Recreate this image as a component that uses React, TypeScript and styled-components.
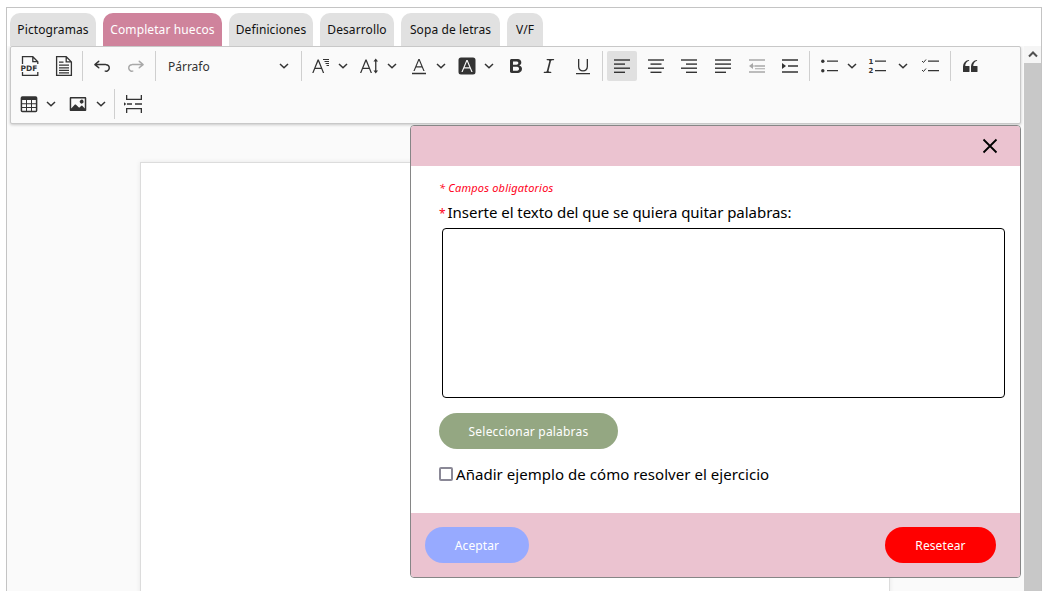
import React from 'react';
import styled, {createGlobalStyle} from "styled-components";

const tabs = [
    {label: "Pictogramas", width: 86},
    {label: "Completar huecos", width: 119},
    {label: "Definiciones", width: 84},
    {label: "Desarrollo", width: 74},
    {label: "Sopa de letras", width: 99},
    {label: "V/F", width: 36},
];

const paths: Record<string, string> = {
    undo: "m5.042 9.367 2.189 1.837a.75.75 0 0 1-.965 1.149l-3.788-3.18a.747.747 0 0 1-.21-.284.75.75 0 0 1 .17-.945L6.23 4.762a.75.75 0 1 1 .964 1.15L4.863 7.866h8.917A.75.75 0 0 1 14 7.9a4 4 0 1 1-1.477 7.718l.344-1.489a2.5 2.5 0 1 0 1.094-4.73l.008-.032H5.042z",
    redo: "m14.958 9.367-2.189 1.837a.75.75 0 0 0 .965 1.149l3.788-3.18a.747.747 0 0 0 .21-.284.75.75 0 0 0-.17-.945L13.77 4.762a.75.75 0 1 0-.964 1.15l2.331 1.955H6.22A.75.75 0 0 0 6 7.9a4 4 0 1 0 1.477 7.718l-.344-1.489A2.5 2.5 0 1 1 6.039 9.4l-.008-.032h8.927z",
    bold: "M10.187 17H5.773c-.637 0-1.092-.138-1.364-.415-.273-.277-.409-.718-.409-1.323V4.738c0-.617.14-1.062.419-1.332.279-.27.73-.406 1.354-.406h4.68c.69 0 1.288.041 1.793.124.506.083.96.242 1.36.478.341.197.644.447.906.75a3.262 3.262 0 0 1 .808 2.162c0 1.401-.722 2.426-2.167 3.075C15.05 10.175 16 11.315 16 13.01a3.756 3.756 0 0 1-2.296 3.504 6.1 6.1 0 0 1-1.517.377c-.571.073-1.238.11-2 .11zm-.217-6.217H7v4.087h3.069c1.977 0 2.965-.69 2.965-2.072 0-.707-.256-1.22-.768-1.537-.512-.319-1.277-.478-2.296-.478zM7 5.13v3.619h2.606c.709 0 1.257-.066 1.645-.198a1.569 1.569 0 0 0 .886-.752c.14-.23.21-.487.21-.771 0-.608-.217-1.012-.65-1.212-.433-.2-1.093-.3-1.98-.3H7z",
    italic: "m9.586 14.633.021.004c-.036.335.095.655.393.962.082.083.173.15.274.201h1.474a.6.6 0 1 1 0 1.2H5.304a.6.6 0 0 1 0-1.2h1.15c.474-.07.809-.182 1.005-.334.157-.122.291-.32.404-.597l2.416-9.55a1.053 1.053 0 0 0-.281-.823 1.12 1.12 0 0 0-.442-.296H8.15a.6.6 0 0 1 0-1.2h6.443a.6.6 0 1 1 0 1.2h-1.195c-.376.056-.65.155-.823.296-.215.175-.423.439-.623.79l-2.366 9.347z",
    quote: "M3 10.423a6.5 6.5 0 0 1 6.056-6.408l.038.67C6.448 5.423 5.354 7.663 5.22 10H9c.552 0 .5.432.5.986v4.511c0 .554-.448.503-1 .503h-5c-.552 0-.5-.449-.5-1.003v-4.574zm8 0a6.5 6.5 0 0 1 6.056-6.408l.038.67c-2.646.739-3.74 2.979-3.873 5.315H17c.552 0 .5.432.5.986v4.511c0 .554-.448.503-1 .503h-5c-.552 0-.5-.449-.5-1.003v-4.574z",
    image: "M6.91 10.54c.26-.23.64-.21.88.03l3.36 3.14 2.23-2.06a.64.64 0 0 1 .87 0l2.52 2.97V4.5H3.2v10.12l3.71-4.08zm10.27-7.51c.6 0 1.09.47 1.09 1.05v11.84c0 .59-.49 1.06-1.09 1.06H2.79c-.6 0-1.09-.47-1.09-1.06V4.08c0-.58.49-1.05 1.1-1.05h14.38zm-5.22 5.56a1.96 1.96 0 1 1 3.4-1.96 1.96 1.96 0 0 1-3.4 1.96z",
    fontColor: "M12.4 10.3 10 4.500l-2.400 5.800h4.800zm.5 1.200H7.100L5.600 15H4.400l5-12h1.200l5 12h-1.200l-1.500-3.500zM3 16.800h14v1.400H3z",
    fontBg: "M4 1.500h12a2.500 2.500 0 0 1 2.500 2.500v12a2.500 2.500 0 0 1-2.500 2.500H4A2.500 2.500 0 0 1 1.500 16V4A2.500 2.500 0 0 1 4 1.500zm8.400 9.800L10 5.500l-2.400 5.800h4.800zm.5 1.200H7.100L5.600 16H4.400l5-12h1.200l5 12h-1.200l-1.500-3.500z",
    fontSize: "M9.800 11.800 7.200 5.400l-2.600 6.400h5.200zm.5 1.200H4.100l-1.600 4H1.200L6.600 3.500h1.200L13.200 17h-1.300l-1.600-4zM12 3h6v1h-6zm1.500 2H18v1h-4.500zm1 2H18v1h-3.500zm1 2H18v1h-2.500z",
    lineHeight: "M8.600 11.800 6 5.400l-2.600 6.400h5.200zm.5 1.200H2.900l-1.600 4H0L5.400 3.500h1.200L12 17h-1.300L9.100 13zM15.100 5.500V14.500h1.300V5.500zM15.750 2.500l2.300 3h-4.600zM15.750 17.500l-2.300-3h4.600z",
    underline: "M3 17h14v1.300H3zM5 3h1.300v7.500c0 2.400 1.500 3.700 3.700 3.700s3.700-1.300 3.700-3.700V3H15v7.500c0 3.200-2 5-5 5s-5-1.800-5-5z",
};

const Icon = ({name, muted}: {name: string, muted?: boolean}) => (
    <Glyph viewBox="0 0 20 20" $muted={muted}><path d={paths[name]} fillRule="evenodd"/></Glyph>
);

const Lines = ({rows}: {rows: number[][]}) => (
    <Glyph viewBox="0 0 20 20">
        {rows.map(([x, w], i) => <rect key={i} x={x} y={3.3 + i * 4.1} width={w} height="1.4"/>)}
    </Glyph>
);

const IndentIcon = ({muted, out}: {muted?: boolean, out?: boolean}) => (
    <Glyph viewBox="0 0 20 20" $muted={muted}>
        <path d="M2 3.300h16v1.400H2zM8 9.300h10v1.400H8zM2 15.300h16v1.400H2z"/>
        <path d={out ? "M6 7v6L2 10z" : "M2 7v6l4-3z"}/>
        {out && <path d="M4 9.500h4v1H4zM8 12.300h10v1H8z"/>}
    </Glyph>
);

const PdfIcon = () => (
    <Glyph viewBox="0 0 20 20">
        <path d="M3.500 8V.7h10.300l5 5V8M13.800.7v5h5M3.500 16v3.300h15.300V16" fill="none" stroke="#333" strokeWidth="1.300"/>
        <PdfLabel x="10" y="14.600" textAnchor="middle">PDF</PdfLabel>
    </Glyph>
);

const DocIcon = () => (
    <Glyph viewBox="0 0 20 20">
        <path d="M3.600.7h9.600l5.200 5.200v13.400H3.600zM13.200.7v5.200h5.200" fill="none" stroke="#333" strokeWidth="1.300"/>
        <path d="M6 5.500h4.500v1.200H6zM6 8.600h10v1.200H6zM6 11.200h10v1.200H6zM6 13.800h10V15H6zM6 16.200h10v1.200H6z"/>
    </Glyph>
);

const TableIcon = () => (
    <Glyph viewBox="0 0 20 20">
        <rect x="2.400" y="3" width="15.200" height="14.600" rx="1" fill="none" stroke="#333" strokeWidth="1.500"/>
        <path d="M2.400 3h15.200v3H2.400zM2.400 9.200h15.200v1H2.400zM2.400 13h15.200v1H2.400zM7 5h1v12H7zM12 5h1v12h-1z"/>
    </Glyph>
);

const ListIcon = ({kind}: {kind: "bullet" | "number" | "todo"}) => (
    <Glyph viewBox="0 0 20 20">
        <path d="M7 4.500h11v1.300H7zM7 14h11v1.300H7z"/>
        {kind === "bullet" && <><circle cx="2.800" cy="5.200" r="1.700"/><circle cx="2.800" cy="14.700" r="1.700"/></>}
        {kind === "number" && <>
            <ListDigit x="3" y="7.500" textAnchor="middle">1</ListDigit>
            <ListDigit x="3" y="17" textAnchor="middle">2</ListDigit>
        </>}
        {kind === "todo" && <path d="M1 5l1.500 1.500L5 3.500M1 14l1.500 1.500L5 12.500" fill="none" stroke="#333" strokeWidth="1"/>}
    </Glyph>
);

const PageBreakIcon = () => (
    <Glyph viewBox="0 0 20 20">
        <path d="M2 1h1.300v3.800h13.400V1H18v5.100H2zM2 19h1.300v-3.800h13.400V19H18v-5.100H2z"/>
        <path d="M3 9.300h5v1.400H3zM11 9.300h7v1.400h-7zM0 8.300l2.300 1.700L0 11.700z"/>
    </Glyph>
);

const Chevron = () => (
    <ChevronGlyph viewBox="0 0 10 10"><path d="M1 3l4 3.800L9 3" fill="none" stroke="#333" strokeWidth="1.500"/></ChevronGlyph>
);

const Split = ({children, width = 45, gap = 7}: {children: React.ReactNode, width?: number, gap?: number}) => (
    <DropButton $width={width} $gap={gap}>{children}<Chevron/></DropButton>
);

export default function App() {
    return (
        <>
            <GlobalStyle/>
            <Frame>
                <TabBar>
                    {tabs.map(t => <Tab key={t.label} $width={t.width} $active={t.label === "Completar huecos"}>{t.label}</Tab>)}
                </TabBar>
                <Workspace>
                    <EditorArea>
                        <Toolbar>
                            <ToolRow>
                                <ToolButton><PdfIcon/></ToolButton>
                                <ToolButton><DocIcon/></ToolButton>
                                <Separator/>
                                <ToolButton><Icon name="undo"/></ToolButton>
                                <ToolButton><Icon name="redo" muted/></ToolButton>
                                <Separator/>
                                <HeadingSelect>Párrafo<Chevron/></HeadingSelect>
                                <Separator/>
                                <Split><Icon name="fontSize"/></Split>
                                <Split><Icon name="lineHeight"/></Split>
                                <Split><Icon name="fontColor"/></Split>
                                <Split><Icon name="fontBg"/></Split>
                                <ToolButton><Icon name="bold"/></ToolButton>
                                <ToolButton><Icon name="italic"/></ToolButton>
                                <ToolButton><Icon name="underline"/></ToolButton>
                                <Separator/>
                                <ToolButton $on><Lines rows={[[2, 16], [2, 11], [2, 16], [2, 11]]}/></ToolButton>
                                <ToolButton><Lines rows={[[2, 16], [4.5, 11], [2, 16], [4.5, 11]]}/></ToolButton>
                                <ToolButton><Lines rows={[[2, 16], [7, 11], [2, 16], [7, 11]]}/></ToolButton>
                                <ToolButton><Lines rows={[[2, 16], [2, 16], [2, 16], [2, 11]]}/></ToolButton>
                                <ToolButton><IndentIcon muted out/></ToolButton>
                                <ToolButton><IndentIcon/></ToolButton>
                                <Separator/>
                                <Split><ListIcon kind="bullet"/></Split>
                                <Split width={49} gap={10}><ListIcon kind="number"/></Split>
                                <ToolButton><ListIcon kind="todo"/></ToolButton>
                                <Separator/>
                                <ToolButton><Icon name="quote"/></ToolButton>
                            </ToolRow>
                            <ToolRow>
                                <Split><TableIcon/></Split>
                                <Split width={47} gap={8.5}><Icon name="image"/></Split>
                                <Separator/>
                                <ToolButton><PageBreakIcon/></ToolButton>
                            </ToolRow>
                        </Toolbar>
                        <Canvas>
                            <Sheet/>
                        </Canvas>
                    </EditorArea>
                    <Scrollbar>
                        <ScrollUp>
                            <svg width="10" height="7" viewBox="0 0 10 7"><path d="M1 5.500l4-4 4 4" fill="none" stroke="#505050" strokeWidth="2"/></svg>
                        </ScrollUp>
                        <ScrollThumb/>
                    </Scrollbar>
                </Workspace>
                <Modal>
                    <ModalHeader>
                        <CloseButton>
                            <svg width="16" height="16" viewBox="0 0 16 16"><path d="M1.500 1.500l13 13M14.500 1.500l-13 13" stroke="#000" strokeWidth="1.800"/></svg>
                        </CloseButton>
                    </ModalHeader>
                    <ModalBody>
                        <Required>* Campos obligatorios</Required>
                        <FieldLabel><Star>*</Star>Inserte el texto del que se quiera quitar palabras:</FieldLabel>
                        <TextBox/>
                        <SelectButton>Seleccionar palabras</SelectButton>
                        <CheckRow>
                            <CheckBox type="checkbox"/>
                            Añadir ejemplo de cómo resolver el ejercicio
                        </CheckRow>
                    </ModalBody>
                    <ModalFooter>
                        <PillButton $bg="#97aaff" $width={104}>Aceptar</PillButton>
                        <PillButton $bg="#ff0000" $width={111}>Resetear</PillButton>
                    </ModalFooter>
                </Modal>
            </Frame>
        </>
    );
}

const GlobalStyle = createGlobalStyle`
    html, body {
        margin: 0;
        height: 100%;
        overflow: hidden;
        background: #fff;
        font-family: "Noto Sans", "Liberation Sans", sans-serif;
    }
`

const Frame = styled.div`
    position: relative;
    margin: 7px 0 0 6px;
    width: 1036px;
    height: 584px;
    box-sizing: border-box;
    border: 1px solid #c4c4c4;
    border-bottom: 0;
    overflow: hidden;
`

const TabBar = styled.div`
    display: flex;
    gap: 7px;
    height: 33px;
    margin-top: 5px;
    padding-left: 3px;
`

const Tab = styled.div<{$active?: boolean, $width: number}>`
    display: flex;
    align-items: center;
    justify-content: center;
    width: ${p => p.$width}px;
    border-radius: 10px 10px 0 0;
    font-size: 12px;
    letter-spacing: .1px;
    background: ${p => p.$active ? "#cf839c" : "#e1e1e1"};
    color: ${p => p.$active ? "#fff" : "#111"};
`

const Workspace = styled.div`
    display: flex;
    height: 545px;
`

const EditorArea = styled.div`
    flex: 1;
    overflow: hidden;
    background: #fafafa;
`

const Toolbar = styled.div`
    display: flex;
    flex-direction: column;
    gap: 8px;
    box-sizing: border-box;
    width: 1011px;
    height: 78px;
    margin-left: 3px;
    padding: 4px 3px;
    background: #fafafa;
    border: 1px solid #c8c8c8;
    border-radius: 2px;
    box-shadow: 0 1px 3px rgba(0, 0, 0, .2);
`

const ToolRow = styled.div`
    display: flex;
    align-items: center;
    gap: 3.6px;
    height: 30px;
`

const ToolButton = styled.div<{$on?: boolean}>`
    display: flex;
    align-items: center;
    justify-content: center;
    flex: none;
    width: 30px;
    height: 30px;
    border-radius: 2px;
    background: ${p => p.$on ? "#e0e0e0" : "transparent"};
`

const DropButton = styled.div<{$width: number, $gap: number}>`
    display: flex;
    align-items: center;
    flex: none;
    gap: ${p => p.$gap}px;
    width: ${p => p.$width}px;
    height: 30px;
    padding-left: 5px;
    box-sizing: border-box;
`

const HeadingSelect = styled.div`
    display: flex;
    align-items: center;
    justify-content: space-between;
    flex: none;
    box-sizing: border-box;
    width: 137px;
    height: 30px;
    padding: 0 8px;
    font-size: 12px;
    color: #333;
`

const Separator = styled.span`
    flex: none;
    width: 1px;
    height: 30px;
    margin: 0 .6px;
    background: #cfcfcf;
`

const Glyph = styled.svg<{$muted?: boolean}>`
    width: 20px;
    height: 20px;
    flex: none;
    fill: ${p => p.$muted ? "#a8a8a8" : "#333"};
`

const ChevronGlyph = styled.svg`
    width: 10px;
    height: 10px;
    flex: none;
`

const PdfLabel = styled.text`
    font-family: "DejaVu Sans", sans-serif;
    font-size: 7.5px;
    font-weight: 700;
    fill: #333;
`

const ListDigit = styled.text`
    font-family: "DejaVu Sans", sans-serif;
    font-size: 7px;
    font-weight: 700;
    fill: #333;
`

const Canvas = styled.div`
    padding: 38px 0 0 133px;
`

const Sheet = styled.div`
    width: 748px;
    height: 500px;
    background: #fff;
    border: 1px solid #dcdcdc;
    box-shadow: 0 0 5px rgba(0, 0, 0, .08);
`

const Scrollbar = styled.div`
    display: flex;
    flex-direction: column;
    width: 17px;
    flex: none;
    background: #f1f1f1;
`

const ScrollUp = styled.div`
    display: flex;
    align-items: center;
    justify-content: center;
    height: 17px;
    background: #f5f5f5;
`

const ScrollThumb = styled.div`
    flex: 1;
    background: #c8c8c8;
`

const Modal = styled.div`
    position: absolute;
    left: 403px;
    top: 117px;
    width: 611px;
    height: 453px;
    box-sizing: border-box;
    display: flex;
    flex-direction: column;
    background: #fff;
    border: 1px solid #868686;
    border-radius: 4px;
    overflow: hidden;
`

const ModalHeader = styled.div`
    display: flex;
    align-items: center;
    justify-content: flex-end;
    height: 40px;
    flex: none;
    padding-right: 22px;
    background: #ebc3d0;
`

const CloseButton = styled.div`
    display: flex;
`

const ModalBody = styled.div`
    flex: 1;
    display: flex;
    flex-direction: column;
    align-items: flex-start;
    padding: 14px 15px 0 28px;
`

const Required = styled.div`
    font-size: 11px;
    line-height: 16px;
    font-style: italic;
    letter-spacing: .2px;
    color: #ff0020;
`

const FieldLabel = styled.label`
    margin-top: 6px;
    font-size: 15px;
    line-height: 20px;
    letter-spacing: -.04px;
    color: #000;
`

const Star = styled.span`
    color: #ff0020;
    font-size: 12px;
    margin-right: 2px;
`

const TextBox = styled.textarea`
    display: block;
    box-sizing: border-box;
    width: 563px;
    height: 170px;
    margin: 4px 0 0 3px;
    border: 1px solid #000;
    border-radius: 4px;
    resize: none;
    outline: none;
`

const SelectButton = styled.button`
    width: 179px;
    height: 36px;
    margin-top: 15px;
    border: 0;
    border-radius: 18px;
    background: #94a782;
    color: #fff;
    font-family: inherit;
    font-size: 12px;
    letter-spacing: .2px;
`

const CheckRow = styled.label`
    display: flex;
    align-items: center;
    gap: 3px;
    margin-top: 15px;
    font-size: 15px;
    line-height: 20px;
    letter-spacing: .05px;
    color: #000;
`

const CheckBox = styled.input`
    appearance: none;
    box-sizing: border-box;
    width: 14px;
    height: 14px;
    margin: 0;
    border: 2px solid #8a8896;
    border-radius: 2px;
    background: #fff;
`

const ModalFooter = styled.div`
    display: flex;
    align-items: center;
    justify-content: space-between;
    flex: none;
    height: 64px;
    padding: 0 24px 0 14px;
    background: #ebc3d0;
`

const PillButton = styled.button<{$bg: string, $width: number}>`
    width: ${p => p.$width}px;
    height: 36px;
    border: 0;
    border-radius: 18px;
    background: ${p => p.$bg};
    color: #fff;
    font-family: inherit;
    font-size: 12px;
    letter-spacing: .1px;
`
